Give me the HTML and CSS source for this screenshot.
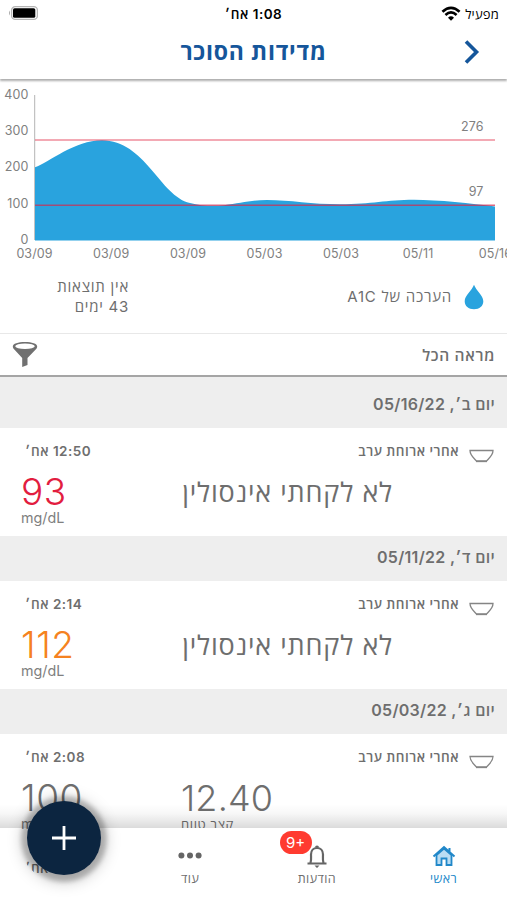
FILE: index.html
```html
<!DOCTYPE html>
<html lang="he" dir="rtl">
<head>
    <meta charset="UTF-8">
    <meta name="viewport" content="width=device-width, initial-scale=1.0">
    <title>מדידות הסוכר</title>
    <link rel="stylesheet" href="styles.css">
</head>
<body>
    <div class="screen">
        <div class="status-bar">
            <div class="carrier">
                <span>מפעיל</span>
                <svg class="wifi" width="20" height="15" viewBox="0 0 18 14">
                    <path d="M1 5.4Q9-1.8 17 5.4M3.8 8.3Q9 3.8 14.2 8.3" fill="none" stroke="#000" stroke-width="2.5"/>
                    <path d="M6.2 10.9Q9 8.2 11.8 10.9L9 13.8z"/>
                </svg>
            </div>
            <div class="clock">1:08 אח׳</div>
            <svg class="battery" width="30" height="14" viewBox="0 0 30 14">
                <rect x="3.6" y=".7" width="25.8" height="12.6" rx="3.6" fill="#fff" stroke="#b5b5b5" stroke-width="1.3"/>
                <rect x="5" y="2.2" width="22.3" height="9.6" rx="1.6"/>
                <path d="M2 4.5Q0 7 2 9.5z" fill="#aaa"/>
            </svg>
        </div>

        <div class="title-bar">
            <h1>מדידות הסוכר</h1>
            <svg class="back" width="16" height="24" viewBox="0 0 16 24">
                <path d="M2 1.500l10.500 10.500L2 22.500" fill="none" stroke="#15569b" stroke-width="3.6"/>
            </svg>
        </div>

        <svg class="chart" width="507" height="185" viewBox="0 80 507 185" direction="ltr">
            <path d="M34.7 95V240" stroke="#b4b4b4"/>
            <path d="M35 167.3C49 162 75 140.2 102 140.2C145 140.2 160 196 190 203C201 205.8 213 206.6 224 205.2C240 203.4 251 200 267 200C290 200 312 204.3 340 204.3C372 204.3 386 199.8 414 199.8C438 199.8 472 203.5 495 206.6V240.6H35z" fill="#29a3de"/>
            <path d="M35 140H495" stroke="#e2304b" stroke-opacity=".55" stroke-width="1.6"/>
            <path d="M35 205.2H495" stroke="#d02c50" stroke-opacity=".72" stroke-width="1.4"/>
            <g class="axis-y">
                <text x="28.500" y="98.700">400</text>
                <text x="28.500" y="134.900">300</text>
                <text x="28.500" y="171.200">200</text>
                <text x="28.500" y="207.500">100</text>
                <text x="28.500" y="243.800">0</text>
                <text x="483.500" y="130.500">276</text>
                <text x="483.500" y="195.500">97</text>
            </g>
            <g class="axis-x">
                <text x="34.500" y="257.500">03/09</text>
                <text x="111.200" y="257.500">03/09</text>
                <text x="188" y="257.500">03/09</text>
                <text x="264.500" y="257.500">05/03</text>
                <text x="341" y="257.500">05/03</text>
                <text x="418" y="257.500">05/11</text>
                <text x="495.500" y="257.500">05/16</text>
            </g>
        </svg>

        <div class="summary">
            <div class="estimate">
                <svg width="20" height="26" viewBox="0 0 20 26">
                    <path d="M10 .8C12 6.500 19.300 11.500 19.300 17.200C19.300 22 15.500 25.200 10 25.200S.7 22 .7 17.200C.7 11.500 8 6.500 10 .8z" fill="#29a3de"/>
                </svg>
                <span>הערכה של A1C</span>
            </div>
            <div class="result">אין תוצאות<br>43 ימים</div>
        </div>

        <div class="filter-bar">
            <span>מראה הכל</span>
            <svg width="26" height="27" viewBox="0 0 26 27">
                <path d="M.8 5.500C.8 2.700 6 1 13 1s12.200 1.700 12.200 4.500c0 1.500-1 2.500-2 3.500L15.500 17v7L10.200 26V17L2.800 9C1.800 8 .8 7 .8 5.500z" fill="#707070"/>
                <ellipse cx="13" cy="5.300" rx="9.800" ry="2.800" fill="#fff"/>
            </svg>
        </div>

        <div class="list">
            <div class="day day-first">יום ב׳, 05/16/22</div>
            <div class="entry">
                <div class="entry-head">
                    <svg class="bowl" width="25" height="14" viewBox="0 0 25 14"><path d="M1 1.500H24C24 6.500 20 9 17.500 12H7.500C5 9 1 6.500 1 1.500z"/><path d="M7 12.500H18"/></svg>
                    <span class="meal">אחרי ארוחת ערב</span>
                    <span class="time">12:50 אח׳</span>
                </div>
                <div class="note">לא לקחתי אינסולין</div>
                <div class="reading">
                    <div class="value low">93</div>
                    <div class="unit">mg/dL</div>
                </div>
            </div>
            <div class="day">יום ד׳, 05/11/22</div>
            <div class="entry">
                <div class="entry-head">
                    <svg class="bowl" width="25" height="14" viewBox="0 0 25 14"><path d="M1 1.500H24C24 6.500 20 9 17.500 12H7.500C5 9 1 6.500 1 1.500z"/><path d="M7 12.500H18"/></svg>
                    <span class="meal">אחרי ארוחת ערב</span>
                    <span class="time">2:14 אח׳</span>
                </div>
                <div class="note">לא לקחתי אינסולין</div>
                <div class="reading">
                    <div class="value high">112</div>
                    <div class="unit">mg/dL</div>
                </div>
            </div>
            <div class="day">יום ג׳, 05/03/22</div>
            <div class="entry">
                <div class="entry-head">
                    <svg class="bowl" width="25" height="14" viewBox="0 0 25 14"><path d="M1 1.500H24C24 6.500 20 9 17.500 12H7.500C5 9 1 6.500 1 1.500z"/><path d="M7 12.500H18"/></svg>
                    <span class="meal">אחרי ארוחת ערב</span>
                    <span class="time">2:08 אח׳</span>
                </div>
                <div class="dose">
                    <div class="value">12.40</div>
                    <div class="dose-type">קצר טווח</div>
                </div>
                <div class="reading">
                    <div class="value">100</div>
                    <div class="unit">mg/dL</div>
                </div>
            </div>
            <div class="entry">
                <div class="entry-head">
                    <span class="time time-last">אח׳</span>
                </div>
            </div>
        </div>

        <div class="tab-bar">
            <div class="tab active">
                <svg width="24" height="22" viewBox="0 0 24 22">
                    <path d="M4.500 10L12 3.500 19.500 10V20H14.500V13.500H9.500V20H4.500z" fill="#b9dcf3" stroke="#2188c9" stroke-width="1.800"/>
                    <path d="M1.500 11.500L12 2.200 22.500 11.500M17.500 3V7" fill="none" stroke="#2188c9" stroke-width="2"/>
                </svg>
                <span>ראשי</span>
            </div>
            <div class="tab">
                <svg width="22" height="24" viewBox="0 0 22 24">
                    <path d="M1.500 19.500H20.500M4.500 19C5.500 16 5 13 5 10.500C5 6.500 7.500 4 11 4s6 2.500 6 6.500C17 13 16.500 16 17.500 19" fill="none" stroke="#656565" stroke-width="2.2"/>
                    <path d="M9 3.500a2 2 0 0 1 4 0zM8.500 21.500h5L11 24z" fill="#656565"/>
                </svg>
                <span>הודעות</span>
                <div class="badge">9+</div>
            </div>
            <div class="tab">
                <svg width="24" height="22" viewBox="0 0 24 22" fill="#656565">
                    <circle cx="3.400" cy="10.500" r="3"/><circle cx="12" cy="10.500" r="3"/><circle cx="20.600" cy="10.500" r="3"/>
                </svg>
                <span>עוד</span>
            </div>
            <div class="tab"></div>
        </div>
        <div class="add-btn">
            <svg width="26" height="26" viewBox="0 0 26 26"><path d="M13 1V25M1 13H25" stroke="#fff" stroke-width="2.800"/></svg>
        </div>
    </div>
</body>
</html>
```
FILE: styles.css
```css
* {
    box-sizing: border-box;
}
body {
    margin: 0;
    font-family: Inter, "Open Sans", "Liberation Sans", sans-serif;
    color: #6e6e6e;
    background: #fff;
}
svg {
    display: block;
    flex: none;
}
.screen {
    position: relative;
    width: 507px;
    height: 900px;
    overflow: hidden;
}
.status-bar {
    display: grid;
    grid-template-columns: 1fr auto 1fr;
    align-items: center;
    height: 27px;
    padding: 0 8px;
    color: #000;
    font-size: 13px;
}
.carrier {
    display: flex;
    align-items: center;
    gap: 4px;
    letter-spacing: .2px;
}
.clock {
    font-weight: 600;
    font-size: 13.5px;
    letter-spacing: .5px;
}
.battery {
    justify-self: end;
    margin-bottom: 1px;
}
.title-bar {
    position: relative;
    display: flex;
    align-items: center;
    justify-content: center;
    height: 52px;
    padding-bottom: 4px;
    box-shadow: 0 2px 2px rgba(0, 0, 0, .32);
}
.title-bar h1 {
    margin: 0;
    color: #15569b;
    font-size: 23px;
    font-weight: 700;
    letter-spacing: .8px;
}
.back {
    position: absolute;
    right: 27px;
    top: 13px;
}
.chart {
    height: 185px;
    margin-top: 1px;
}
.chart text {
    fill: #808080;
    font-size: 12.5px;
    letter-spacing: .1px;
}
.axis-y {
    text-anchor: end;
}
.axis-x {
    text-anchor: middle;
}
.summary {
    display: flex;
    justify-content: space-between;
    height: 69px;
    border-bottom: 1px solid #e8e8e8;
    padding: 12px 23px 0 58px;
    font-size: 15px;
    line-height: 20px;
    letter-spacing: .75px;
}
.estimate {
    display: flex;
    gap: 12px;
    padding-top: 7px;
}
.estimate span {
    padding-top: 3px;
}
.result {
    width: 71px;
    white-space: nowrap;
}
.filter-bar {
    display: flex;
    align-items: center;
    justify-content: space-between;
    height: 43px;
    padding: 0 12px;
    border-bottom: 2px solid #a5a5a5;
    font-size: 15.5px;
    font-weight: 600;
    letter-spacing: .7px;
}
.day {
    height: 45px;
    padding: 0 12px;
    background: #eee;
    font-size: 16px;
    font-weight: 600;
    letter-spacing: .3px;
    line-height: 42px;
}
.day-first {
    height: 51px;
    line-height: 55px;
}
.entry {
    display: grid;
    grid-template-columns: 1fr 160px;
    grid-template-rows: 44px 64px;
    height: 108px;
}
.entry-head {
    grid-column: 1 / 3;
    display: flex;
    padding: 13px 13px 0 25px;
    font-size: 13.5px;
    font-weight: 600;
    letter-spacing: .5px;
    line-height: 20px;
}
.bowl {
    margin-top: 8px;
    fill: #fff;
    stroke: #858585;
    stroke-width: 1.3;
}
.meal {
    margin-right: 10px;
}
.time {
    margin-right: auto;
}
.time-last {
    padding-top: 3px;
}
.note {
    padding: 1px 114px 0 0;
    font-size: 27px;
    letter-spacing: .8px;
    line-height: 40px;
    white-space: nowrap;
}
.dose {
    direction: ltr;
    padding-left: 21px;
}
.dose-type {
    margin-top: -2px;
    font-size: 13px;
    letter-spacing: .6px;
    line-height: 16px;
}
.reading {
    direction: ltr;
    padding-left: 21px;
}
.value {
    font-size: 36px;
    font-weight: 300;
    letter-spacing: .2px;
    line-height: 40px;
}
.reading .value {
    font-size: 37px;
    letter-spacing: .6px;
}
.low {
    color: #e21d3f;
}
.high {
    color: #f58220;
}
.unit {
    color: #808080;
    font-size: 14.3px;
    line-height: 12px;
}
.tab-bar {
    position: absolute;
    left: 0;
    right: 0;
    bottom: 0;
    display: grid;
    grid-template-columns: repeat(4, 1fr);
    height: 72px;
    background: radial-gradient(circle at 64px 10px, transparent 45px, #fff 46px);
    font-size: 12.5px;
    letter-spacing: .4px;
}
.tab-bar::before {
    content: "";
    position: absolute;
    left: 0;
    right: 0;
    top: -24px;
    height: 24px;
    background: linear-gradient(transparent, rgba(0, 0, 0, .03) 40%, rgba(0, 0, 0, .14));
}
.tab {
    position: relative;
    display: flex;
    flex-direction: column;
    align-items: center;
    padding-top: 16px;
}
.tab svg {
    height: 24px;
}
.tab span {
    margin-top: 2px;
    line-height: 17px;
}
.active {
    color: #2188c9;
}
.badge {
    position: absolute;
    left: 26px;
    top: 3px;
    width: 32px;
    height: 23px;
    border-radius: 12px;
    background: #ff3b30;
    color: #fff;
    direction: ltr;
    font-size: 15px;
    letter-spacing: 0;
    line-height: 23px;
    text-align: center;
}
.add-btn {
    position: absolute;
    left: 27px;
    top: 801px;
    display: flex;
    align-items: center;
    justify-content: center;
    width: 74px;
    height: 74px;
    border-radius: 50%;
    background: #0c2540;
    box-shadow: 0 1px 4px 6px rgba(0, 0, 0, .2), 0 2px 16px 4px rgba(0, 0, 0, .25);
}
```
